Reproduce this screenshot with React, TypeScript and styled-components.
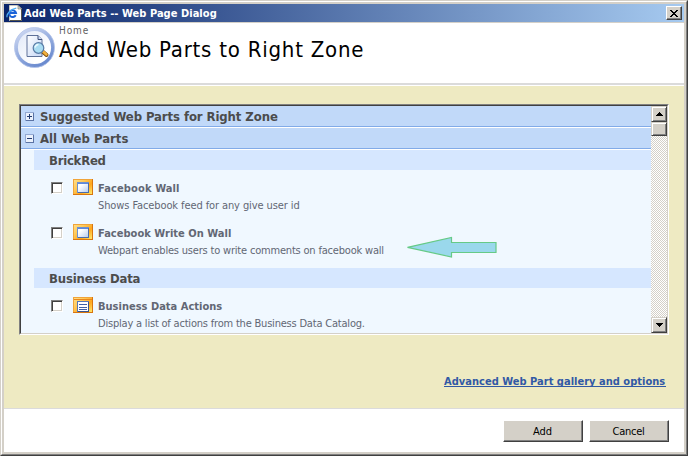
import React from 'react';
import styled, { createGlobalStyle } from 'styled-components';

const GlobalStyle = createGlobalStyle`
  * { box-sizing: border-box; }
  body {
    margin: 0;
    overflow: hidden;
    font-family: "DejaVu Sans Condensed", "DejaVu Sans", Tahoma, Verdana, sans-serif;
  }
  svg { display: block; flex: none; }
`;

const Frame = styled.div`
  width: 688px;
  height: 456px;
  border: 1px solid;
  border-color: #d4d0c8 #404040 #404040 #d4d0c8;
  background: #d4d0c8;
`;

const FrameInner = styled.div`
  height: 100%;
  padding: 2px;
  border: 1px solid;
  border-color: #fff #808080 #808080 #fff;
  display: flex;
  flex-direction: column;
`;

const TitleBar = styled.div`
  height: 18px;
  flex: none;
  margin-bottom: 1px;
  padding: 0 2px;
  display: flex;
  align-items: center;
  background: linear-gradient(90deg, #0a246a, #a6caf0);
`;

const TitleText = styled.div`
  flex: 1;
  margin-left: 2px;
  padding-top: 2px;
  color: #fff;
  font-size: 11px;
  font-weight: 700;
  line-height: 18px;
  letter-spacing: 0.04px;
  white-space: nowrap;
`;

const CloseButton = styled.button`
  width: 16px;
  height: 14px;
  padding: 0;
  border: 1px solid;
  border-color: #fff #404040 #404040 #fff;
  box-shadow: inset -1px -1px #808080;
  background: #d4d0c8;
  display: flex;
  align-items: center;
  justify-content: center;
`;

const Header = styled.header`
  height: 60px;
  flex: none;
  padding: 1px 0 0 9px;
  background: #fff;
  display: flex;
  align-items: flex-start;
  gap: 4px;
`;

const HeaderText = styled.div`
  white-space: nowrap;
`;

const Crumb = styled.div`
  color: #5f5f5f;
  font-size: 10px;
  line-height: 13px;
  letter-spacing: 0.9px;
`;

const Heading = styled.h1`
  margin: 0;
  color: #000;
  font-size: 22px;
  font-weight: 400;
  line-height: 26px;
  letter-spacing: 0.77px;
`;

const Body = styled.main`
  flex: 1;
  border-top: 2px solid #dbdbdb;
  box-shadow: inset 0 1px #fff;
  background: #eeeac2;
  padding: 19px 15px 0;
`;

const ListBox = styled.section`
  height: 231px;
  border: 1px solid;
  border-color: #808080 #fff #fff #808080;
`;

const ListInner = styled.div`
  height: 100%;
  border: 1px solid;
  border-color: #404040 #d4d0c8 #d4d0c8 #404040;
  display: flex;
`;

const ListContent = styled.div`
  flex: 1;
  min-width: 0;
  overflow: hidden;
  background: #f0f8ff;
`;

const GroupRow = styled.div`
  height: 22px;
  padding-left: 4px;
  border-bottom: 1px solid #fff;
  box-shadow: inset 0 -1px #82abe8;
  background: #c1d9f9;
  display: flex;
  align-items: flex-start;
`;

const Toggle = styled.span`
  width: 8px;
  height: 8px;
  margin: 6px 7px 0 0;
  flex: none;
`;

const GroupLabel = styled.div<{ $spacing?: number }>`
  color: #4c4c4c;
  font-size: 13px;
  font-weight: 700;
  line-height: 22px;
  letter-spacing: ${(p) => p.$spacing ?? 0}px;
  white-space: nowrap;
`;

const Category = styled.div<{ $gap?: number }>`
  height: 20px;
  margin: ${(p) => p.$gap ?? 0}px 0 0 13px;
  padding-left: 15px;
  background: #d6e7ff;
`;

const Item = styled.div`
  height: 45px;
  padding: 9px 0 0 30px;
  display: flex;
  align-items: flex-start;
`;

const Check = styled.span`
  width: 12px;
  height: 12px;
  margin: 3px 10px 0 0;
  flex: none;
  border: 1px solid;
  border-color: #808080 #fff #fff #808080;
  background: #fff;
  box-shadow: inset 1px 1px #404040, inset -1px -1px #d4d0c8;
`;

const ItemText = styled.div`
  margin: 1px 0 0 5px;
  color: #626774;
  font-size: 11px;
  white-space: nowrap;
`;

const ItemTitle = styled.div<{ $spacing: number }>`
  font-weight: 700;
  line-height: 17px;
  letter-spacing: ${(p) => p.$spacing}px;
`;

const ItemNote = styled.div<{ $spacing: number }>`
  line-height: 18px;
  letter-spacing: ${(p) => p.$spacing}px;
`;

const Pointer = styled.div`
  margin: 12px 0 0 22px;
`;

const Scrollbar = styled.div`
  width: 16px;
  flex: none;
  display: flex;
  flex-direction: column;
  background: repeating-conic-gradient(#d4d0c8 0 25%, #fff 0 50%) 0 0 / 2px 2px;
`;

const ScrollPart = styled.div<{ $height: number; $last?: boolean }>`
  height: ${(p) => p.$height}px;
  margin-top: ${(p) => (p.$last ? 'auto' : '0')};
  border: 1px solid;
  border-color: #d4d0c8 #404040 #404040 #d4d0c8;
  box-shadow: inset 1px 1px #fff, inset -1px -1px #808080;
  background: #d4d0c8;
  display: flex;
  align-items: center;
  justify-content: center;
`;

const GalleryLink = styled.a`
  display: block;
  margin: 39px 3px 0 auto;
  width: 222px;
  height: 13px;
  border-bottom: 1px solid #3159a5;
  color: #3159a5;
  font-size: 11px;
  font-weight: 700;
  line-height: 16px;
  letter-spacing: 0.02px;
  white-space: nowrap;
`;

const Footer = styled.footer`
  height: 44px;
  flex: none;
  padding: 11px 15px 0;
  border-top: 1px solid #dbdbdb;
  background: #fff;
  display: flex;
  justify-content: flex-end;
  gap: 6px;
`;

const PushButton = styled.button<{ $spacing: number }>`
  width: 80px;
  height: 22px;
  padding: 2px 1px 0 0;
  border: 1px solid;
  border-color: #fff #404040 #404040 #fff;
  box-shadow: inset -1px -1px #808080;
  background: #d4d0c8;
  color: #000;
  font-family: inherit;
  font-size: 11px;
  line-height: 18px;
  letter-spacing: ${(p) => p.$spacing}px;
`;

function BrowserIcon() {
  return (
    <svg width="16" height="16" viewBox="0 0 16 16">
      <path d="M3.500 .5h8.500l3.500 3.500v11.500h-12z" fill="#fff" stroke="#c9c9c0" />
      <path d="M15.500 4v11.500H4" fill="none" stroke="#55554c" />
      <path d="M12 .5V4h3.500z" fill="#d8d8cc" stroke="#77776c" strokeWidth=".6" />
      <path d="M9.700 10.200A3.400 3.400 0 1 1 10 8H4" fill="none" stroke="#1c63d8" strokeWidth="2" />
      <path d="M1.200 12.300C-.3 9.500 5 3.700 10.300 3.200" fill="none" stroke="#4fb0f5" strokeWidth="1.200" />
    </svg>
  );
}

function PageSearchIcon() {
  return (
    <svg width="42" height="45" viewBox="0 0 42 45">
      <defs>
        <linearGradient id="ring" x1=".2" y1="0" x2=".8" y2="1">
          <stop offset="0" stopColor="#cbd6f1" />
          <stop offset=".5" stopColor="#93abde" />
          <stop offset="1" stopColor="#6485cc" />
        </linearGradient>
        <linearGradient id="disc" x1="0" y1="0" x2="1" y2="1">
          <stop offset="0" stopColor="#dfe7f8" />
          <stop offset=".7" stopColor="#fff" />
        </linearGradient>
        <linearGradient id="sheet" x1="0" y1="0" x2="1" y2="1">
          <stop offset="0" stopColor="#fff" />
          <stop offset="1" stopColor="#c5d6f5" />
        </linearGradient>
      </defs>
      <circle cx="21.500" cy="23.500" r="18.300" fill="url(#disc)" stroke="url(#ring)" strokeWidth="3.400" />
      <circle cx="21.500" cy="23.500" r="20" fill="none" stroke="#b3c3ea" strokeWidth=".8" />
      <path d="M14 11.500h11l4 4v17H14z" fill="url(#sheet)" stroke="#5e7199" />
      <path d="M25 11.500v4h4" fill="#d0dcf3" stroke="#3d4f78" />
      <path d="M29.500 27.500l4 3.500" stroke="#7a4b10" strokeWidth="4" strokeLinecap="round" />
      <path d="M30 27.500l3.400 3" stroke="#f3b13b" strokeWidth="2.600" strokeLinecap="round" />
      <circle cx="25.500" cy="24" r="5.300" fill="#a9dcf2" stroke="#587ba5" strokeWidth="1.200" />
      <path d="M22 23.500a3.700 3.700 0 0 1 3.500-3" fill="none" stroke="#e8faff" strokeWidth="1.500" />
    </svg>
  );
}

function ToggleIcon({ open }: { open?: boolean }) {
  return (
    <Toggle>
      <svg width="9" height="9" viewBox="0 0 9 9" shapeRendering="crispEdges">
        <rect x="0.500" y="0.500" width="8" height="8" fill="#eaf1fc" stroke="#93a9d2" />
        <path d="M8.500 1v7.500H1" fill="none" stroke="#5b73a4" />
        <path d={open ? 'M2 4.500h5' : 'M2 4.500h5M4.500 2v5'} stroke="#223b70" />
      </svg>
    </Toggle>
  );
}

function PartIcon({ list }: { list?: boolean }) {
  const id = list ? 'gold-list' : 'gold';
  return (
    <svg width="20" height="16" viewBox="0 0 20 16" shapeRendering="crispEdges">
      <defs>
        <linearGradient id={id} x1="0" y1="0" x2="1" y2=".8">
          <stop offset="0" stopColor="#ffe08c" />
          <stop offset=".35" stopColor="#ffcb5c" />
          <stop offset=".7" stopColor="#ffa51a" />
          <stop offset="1" stopColor="#ffdf60" />
        </linearGradient>
        <linearGradient id={`${id}-face`} x1="0" y1="0" x2="1" y2="1">
          <stop offset=".3" stopColor="#fff" />
          <stop offset="1" stopColor="#b4cbf0" />
        </linearGradient>
      </defs>
      <rect x=".5" y=".5" width="19" height="15" fill={`url(#${id})`} stroke="#f0a43a" />
      <path d="M19.500 0v15.500H0" fill="none" stroke="#d9760f" />
      {list ? (
        <>
          <path d="M1 2.500h18" stroke="#e8861c" />
          <rect x="4.500" y="4.500" width="11" height="10" fill="#fff" stroke="#5576b8" />
          <path d="M6 7h8M6 10h8M6 12.500h8" stroke="#3f60a6" />
          <path d="M15.500 5v9.500H5" fill="none" stroke="#39558f" />
        </>
      ) : (
        <>
          <rect x="4.500" y="3.500" width="11" height="10" fill={`url(#${id}-face)`} stroke="#6c90d2" />
          <path d="M5 4.500h10" stroke="#5d88dc" />
          <path d="M15.500 4v9.500H5" fill="none" stroke="#4a6cac" />
        </>
      )}
    </svg>
  );
}

interface PartProps {
  title: string;
  note: string;
  titleSpacing: number;
  noteSpacing: number;
  list?: boolean;
  children?: React.ReactNode;
}

function Part({ title, note, titleSpacing, noteSpacing, list, children }: PartProps) {
  return (
    <Item>
      <Check role="checkbox" aria-checked="false" />
      <PartIcon list={list} />
      <ItemText>
        <ItemTitle $spacing={titleSpacing}>{title}</ItemTitle>
        <ItemNote $spacing={noteSpacing}>{note}</ItemNote>
      </ItemText>
      {children}
    </Item>
  );
}

export default function App() {
  return (
    <>
      <GlobalStyle />
      <Frame>
        <FrameInner>
          <TitleBar>
            <BrowserIcon />
            <TitleText>Add Web Parts -- Web Page Dialog</TitleText>
            <CloseButton aria-label="Close">
              <svg width="8" height="7" viewBox="0 0 8 7" shapeRendering="crispEdges">
                <path d="M0 0h2v1h1v1h2v-1h1v-1h2v1h-1v1h-1v1h-1v1h1v1h1v1h1v1h-2v-1h-1v-1h-2v1h-1v1h-2v-1h1v-1h1v-1h1v-1h-1v-1h-1v-1h-1z" />
              </svg>
            </CloseButton>
          </TitleBar>
          <Header>
            <PageSearchIcon />
            <HeaderText>
              <Crumb>Home</Crumb>
              <Heading>Add Web Parts to Right Zone</Heading>
            </HeaderText>
          </Header>
          <Body>
            <ListBox>
              <ListInner>
                <ListContent>
                  <GroupRow>
                    <ToggleIcon />
                    <GroupLabel $spacing={-0.09}>Suggested Web Parts for Right Zone</GroupLabel>
                  </GroupRow>
                  <GroupRow>
                    <ToggleIcon open />
                    <GroupLabel>All Web Parts</GroupLabel>
                  </GroupRow>
                  <Category>
                    <GroupLabel $spacing={-0.25}>BrickRed</GroupLabel>
                  </Category>
                  <Part
                    title="Facebook Wall"
                    note="Shows Facebook feed for any give user id"
                    titleSpacing={0.12}
                    noteSpacing={-0.1}
                  />
                  <Part
                    title="Facebook Write On Wall"
                    note="Webpart enables users to write comments on facebook wall"
                    titleSpacing={0.02}
                    noteSpacing={-0.19}
                  >
                    <Pointer>
                      <svg width="92" height="22" viewBox="0 0 92 22">
                        <path
                          d="M1.500 11.300L45.500 1.500V6.500H90V16.500H45.500V21z"
                          fill="#9ad8ec"
                          stroke="#66ca86"
                          strokeWidth="1.200"
                        />
                      </svg>
                    </Pointer>
                  </Part>
                  <Category $gap={8}>
                    <GroupLabel $spacing={-0.17}>Business Data</GroupLabel>
                  </Category>
                  <Part
                    title="Business Data Actions"
                    note="Display a list of actions from the Business Data Catalog."
                    titleSpacing={0.01}
                    noteSpacing={-0.2}
                    list
                  />
                </ListContent>
                <Scrollbar>
                  <ScrollPart $height={16}>
                    <svg width="7" height="4" viewBox="0 0 7 4" shapeRendering="crispEdges">
                      <path d="M3 0h1v1h1v1h1v1h1v1h-7v-1h1v-1h1v-1h1z" />
                    </svg>
                  </ScrollPart>
                  <ScrollPart $height={14} />
                  <ScrollPart $height={16} $last>
                    <svg width="7" height="4" viewBox="0 0 7 4" shapeRendering="crispEdges">
                      <path d="M0 0h7v1h-1v1h-1v1h-1v1h-1v-1h-1v-1h-1v-1h-1z" />
                    </svg>
                  </ScrollPart>
                </Scrollbar>
              </ListInner>
            </ListBox>
            <GalleryLink>Advanced Web Part gallery and options</GalleryLink>
          </Body>
          <Footer>
            <PushButton $spacing={0}>Add</PushButton>
            <PushButton $spacing={-0.25}>Cancel</PushButton>
          </Footer>
        </FrameInner>
      </Frame>
    </>
  );
}
